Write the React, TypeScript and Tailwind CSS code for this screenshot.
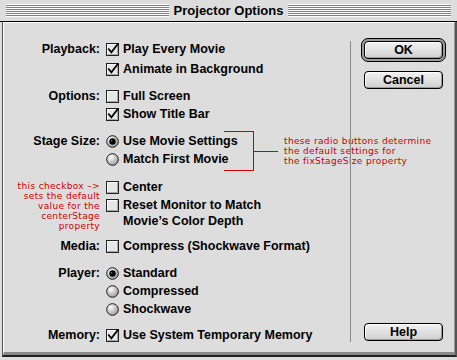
import type { ReactNode } from 'react';

const RED = 'text-[#cc0000]';
const NOTE = "font-normal text-[9px] leading-[10px] tracking-[0.35px] whitespace-nowrap font-['DejaVu_Sans',sans-serif]";

function Checkbox({ checked }: { checked?: boolean }) {
  return (
    <svg width="13" height="13" viewBox="0 0 13 13" className="shrink-0 overflow-visible">
      <rect x="0.5" y="0.5" width="12" height="12" fill="#e6e6e6" stroke="#222" />
      <path d="M1.5 11.5V1.5H11.5" fill="none" stroke="#fff" />
      <path d="M1.5 11.5H11.5V1.5" fill="none" stroke="#a8a8a8" />
      {checked && (
        <polyline points="2.8,6.2 5.4,9.4 11.6,1.2" fill="none" stroke="#000" strokeWidth="1.8" strokeLinecap="square" />
      )}
    </svg>
  );
}

function Radio({ checked }: { checked?: boolean }) {
  return (
    <svg width="13" height="13" viewBox="0 0 13 13" className="shrink-0">
      <defs>
        <radialGradient id="rg" cx="0.35" cy="0.3" r="0.75">
          <stop offset="0" stopColor="#ffffff" />
          <stop offset="1" stopColor="#9a9a9a" />
        </radialGradient>
      </defs>
      <circle cx="6.5" cy="6.5" r="5.8" fill="url(#rg)" stroke="#1a1a1a" strokeWidth="1" />
      {checked && <circle cx="6.5" cy="6.5" r="3.2" fill="#000" />}
      {checked && <circle cx="5.6" cy="5.6" r="0.8" fill="#777" />}
    </svg>
  );
}

function Item({ kind, checked, children }: { kind: 'check' | 'radio'; checked?: boolean; children: ReactNode }) {
  return (
    <div className="flex items-start">
      <div className="h-[18px] w-[17px] flex items-center shrink-0">
        {kind === 'check' ? <Checkbox checked={checked} /> : <Radio checked={checked} />}
      </div>
      <div className="leading-[18px] whitespace-nowrap">{children}</div>
    </div>
  );
}

function Group({ label, className, gap, children }: { label: ReactNode; className?: string; gap?: string; children: ReactNode }) {
  return (
    <div className={`flex items-start ${className ?? ''}`}>
      <div className="w-[96px] h-[18px] shrink-0 text-right leading-[18px]">{label}</div>
      <div className={`ml-[6px] flex flex-col ${gap ?? ''}`}>{children}</div>
    </div>
  );
}

function PushButton({ children }: { children: ReactNode }) {
  return (
    <div className="w-[79px] h-[18px] rounded-[4px] border border-black bg-gradient-to-b from-[#f2f2f2] to-[#d0d0d0] shadow-[inset_1px_1px_0_#fff,inset_-1px_-1px_0_#9a9a9a] flex items-center justify-center leading-none">
      {children}
    </div>
  );
}

export default function App() {
  return (
    <div className="w-[457px] h-[360px] bg-[#dddddd] flex flex-col overflow-hidden text-black font-bold text-[12.5px] font-['Liberation_Sans',Arial,sans-serif]">
      {/* Title bar */}
      <div className="h-[21px] px-[6px] pt-[4px] shrink-0">
        <div className="h-[13px] bg-[repeating-linear-gradient(to_bottom,#ffffff_0px,#ffffff_1px,#808080_1px,#808080_2px)] flex items-center justify-center">
          <span className="bg-[#dddddd] px-[5px] text-[13px] leading-[17px]">Projector Options</span>
        </div>
      </div>
      <div className="h-px bg-black shrink-0" />

      {/* Window body */}
      <div className="flex-1 flex pl-[2px] pb-[3px]">
        <div className="flex-1 flex border-l border-l-[#555] border-b-2 border-b-[#222] border-r-2 border-r-[#555]">
          <div className="flex-1 flex border-l border-t border-white border-b-[3px] border-b-[#888] border-r border-r-[#999]">
            {/* Form */}
            <div className="w-[346px] shrink-0 pt-[17px] flex flex-col">
              <Group label="Playback:" gap="gap-[2px]">
                <Item kind="check" checked>Play Every Movie</Item>
                <Item kind="check" checked>Animate in Background</Item>
              </Group>

              <Group label="Options:" className="mt-[9px]">
                <Item kind="check">Full Screen</Item>
                <Item kind="check" checked>Show Title Bar</Item>
              </Group>

              <Group label="Stage Size:" className="mt-[9px]">
                <div className="flex items-start">
                  <div className="w-[118px] flex flex-col shrink-0">
                    <Item kind="radio" checked>Use Movie Settings</Item>
                    <Item kind="radio">Match First Movie</Item>
                  </div>
                  <div className="flex items-center -mt-[1px]">
                    <div className="w-[30px] h-[40px] border-t border-r border-b border-[#cc0000]" />
                    <div className="w-[24px] h-px bg-[#cc0000]" />
                    <div className={`ml-[6px] ${NOTE} ${RED}`}>
                      <div>these radio buttons determine</div>
                      <div>the default settings for</div>
                      <div>the fixStageSize property</div>
                    </div>
                  </div>
                </div>
              </Group>

              <Group
                className="mt-[7px]"
                label={
                  <div className={`pt-[3px] ${NOTE} ${RED}`}>
                    <div>this checkbox –&gt;</div>
                    <div>sets the default</div>
                    <div>value for the</div>
                    <div>centerStage</div>
                    <div>property</div>
                  </div>
                }
              >
                <Item kind="check">Center</Item>
                <div className="flex items-start">
                  <div className="h-[18px] w-[17px] flex items-center shrink-0">
                    <Checkbox />
                  </div>
                  <div className="pt-px leading-[16px] whitespace-nowrap">
                    <div>Reset Monitor to Match</div>
                    <div>Movie’s Color Depth</div>
                  </div>
                </div>
              </Group>

              <Group label="Media:" className="mt-[8px]">
                <Item kind="check">Compress (Shockwave Format)</Item>
              </Group>

              <Group label="Player:" className="mt-[9px]">
                <Item kind="radio" checked>Standard</Item>
                <Item kind="radio">Compressed</Item>
                <Item kind="radio">Shockwave</Item>
              </Group>

              <Group label="Memory:" className="mt-[8px]">
                <Item kind="check" checked>Use System Temporary Memory</Item>
              </Group>
            </div>

            {/* Divider */}
            <div className="w-px bg-[#8a8a8a] mt-[18px] mb-[10px] shrink-0" />

            {/* Buttons */}
            <div className="flex-1 pl-[10px] pt-[15px] pb-[11px] flex flex-col justify-between">
              <div className="flex flex-col">
                <div className="w-[85px] h-[24px] rounded-[7px] border border-black bg-[#9c9c9c] p-[2px]">
                  <PushButton>OK</PushButton>
                </div>
                <div className="ml-[3px] mt-[9px]">
                  <PushButton>Cancel</PushButton>
                </div>
              </div>
              <div className="ml-[3px]">
                <PushButton>Help</PushButton>
              </div>
            </div>
          </div>
        </div>
      </div>
    </div>
  );
}
